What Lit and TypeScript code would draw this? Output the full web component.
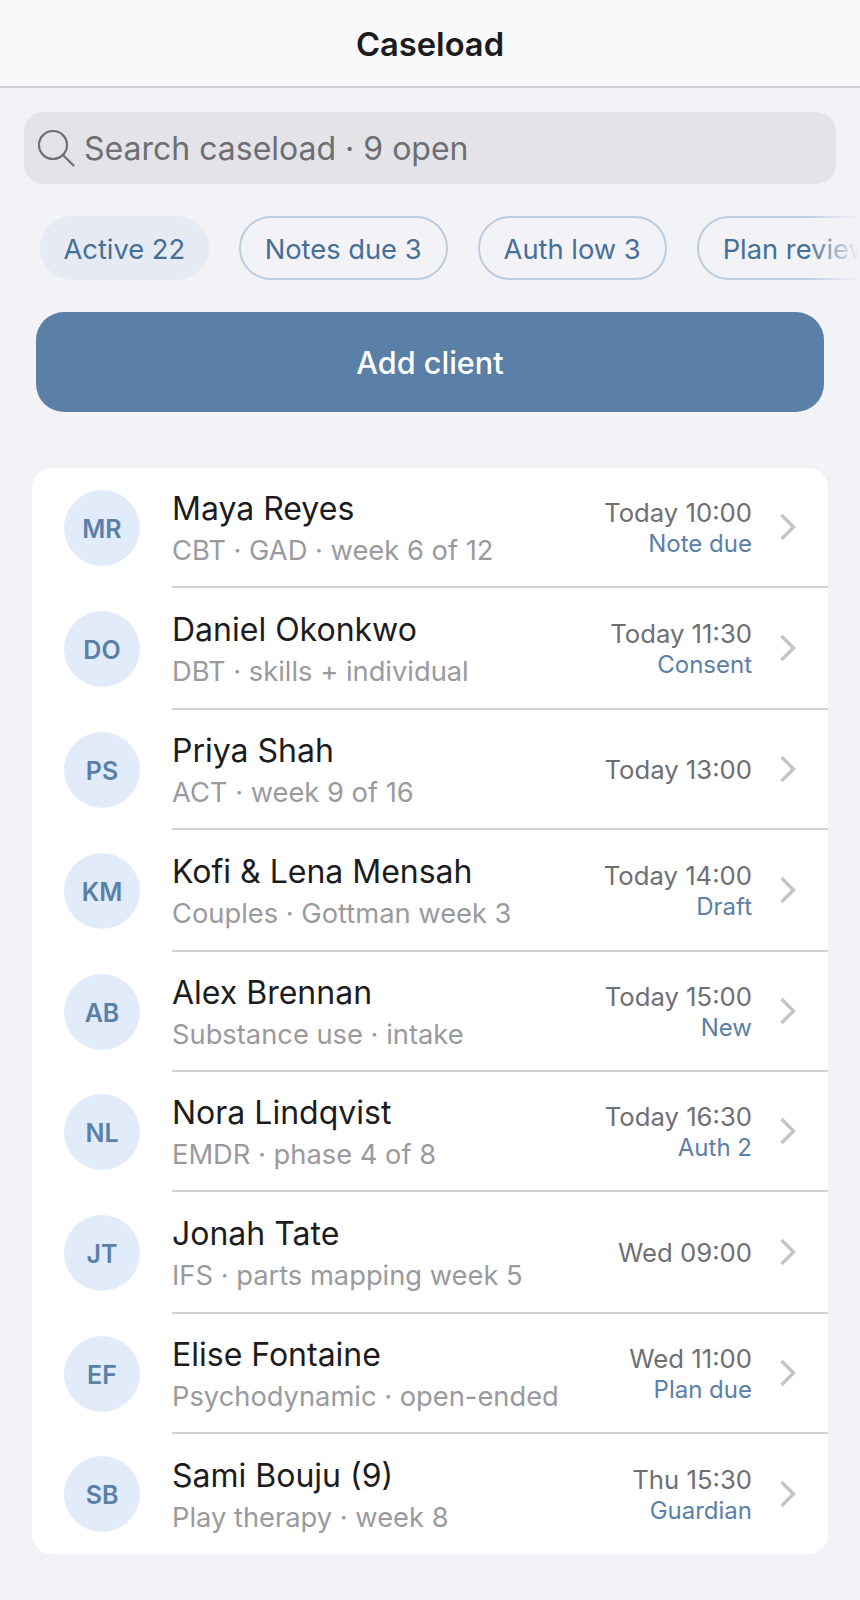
import { LitElement, html, css } from "lit";
import { customElement } from "lit/decorators.js";

const clients = [
  { i: "MR", n: "Maya Reyes", d: "CBT · GAD · week 6 of 12", t: "Today 10:00", s: "Note due" },
  { i: "DO", n: "Daniel Okonkwo", d: "DBT · skills + individual", t: "Today 11:30", s: "Consent" },
  { i: "PS", n: "Priya Shah", d: "ACT · week 9 of 16", t: "Today 13:00", s: "" },
  { i: "KM", n: "Kofi & Lena Mensah", d: "Couples · Gottman week 3", t: "Today 14:00", s: "Draft" },
  { i: "AB", n: "Alex Brennan", d: "Substance use · intake", t: "Today 15:00", s: "New" },
  { i: "NL", n: "Nora Lindqvist", d: "EMDR · phase 4 of 8", t: "Today 16:30", s: "Auth 2" },
  { i: "JT", n: "Jonah Tate", d: "IFS · parts mapping week 5", t: "Wed 09:00", s: "" },
  { i: "EF", n: "Elise Fontaine", d: "Psychodynamic · open-ended", t: "Wed 11:00", s: "Plan due" },
  { i: "SB", n: "Sami Bouju (9)", d: "Play therapy · week 8", t: "Thu 15:30", s: "Guardian" },
];

@customElement("app-root")
export class AppRoot extends LitElement {
  static styles = css`
    :host { display: block; width: 860px; height: 1600px; overflow: hidden; background: #f2f2f7; font-family: Inter, "Liberation Sans", sans-serif; }
    .nav { height: 84px; padding-top: 2px; background: #f9f9fb; border-bottom: 2px solid #d1d1d6; display: flex; align-items: center; justify-content: center; font-size: 32.7px; font-weight: 600; color: #1c1c1e; }
    .search { margin: 24px 24px 0; height: 72px; border-radius: 20px; background: #e3e3e8; display: flex; align-items: center; padding: 0 13px; gap: 9px; color: #6e6e73; font-size: 32px; }
    .chips { margin-top: 32px; padding-left: 40px; display: flex; gap: 30px; height: 64px; overflow: hidden; position: relative; }
    .chip { flex: none; height: 64px; box-sizing: border-box; border-radius: 32px; border: 2px solid #bccde0; padding: 3px 24px 0; display: flex; align-items: center; font-size: 27.3px; color: #466f98; white-space: nowrap; }
    .chip.on { background: #e6eaf3; border: 0; padding: 3px 23.5px 0; }
    .fade { position: absolute; top: 0; right: 0; width: 52px; height: 64px; background: linear-gradient(to right, rgba(242,242,247,0), #f2f2f7); }
    .add { margin: 32px 36px 0; height: 100px; box-sizing: border-box; padding-top: 1px; border-radius: 28px; background: #5a80a8; color: #fff; font-size: 30.6px; font-weight: 500; display: flex; align-items: center; justify-content: center; }
    .card { margin: 56px 32px 0; background: #fff; border-radius: 20px; overflow: hidden; }
    .row { height: 120px; display: flex; align-items: center; box-sizing: border-box; }
    .row:nth-child(2), .row:nth-child(4), .row:nth-child(7) { height: 122px; }
    .av { flex: none; width: 76px; height: 76px; box-sizing: border-box; padding-top: 2px; border-radius: 50%; background: #e1ebfa; color: #5a80a8; margin-left: 32px; font-size: 25px; font-weight: 600; display: flex; align-items: center; justify-content: center; }
    .body { flex: 1; height: 100%; margin-left: 32px; display: flex; align-items: center; box-sizing: border-box; border-bottom: 2px solid #d1d1d6; padding-right: 30px; min-width: 0; }
    .row:last-child .body { border-bottom: 0; }
    .text { flex: 1; min-width: 0; padding-top: 4px; }
    .name { font-size: 32px; line-height: 40px; color: #1c1c1e; }
    .desc { font-size: 27.3px; line-height: 36px; margin-top: 4px; color: #9a9a9e; }
    .right { text-align: right; margin-right: 28px; padding-top: 2px; }
    .time { font-size: 25.7px; line-height: 32px; color: #6e6e73; }
    .sub { font-size: 24px; line-height: 30px; color: #5a80a8; }
    svg { display: block; flex: none; }
  `;

  render() {
    return html`
      <div class="nav">Caseload</div>
      <div class="search">
        <svg width="38" height="38" viewBox="0 0 38 38" fill="none" stroke="#6e6e73" stroke-width="2.2" stroke-linecap="round"><circle cx="16" cy="16" r="14"/><path d="M26 26l10.5 10.5"/></svg>
        <span>Search caseload · 9 open</span>
      </div>
      <div class="chips">
        <div class="chip on">Active 22</div>
        <div class="chip">Notes due 3</div>
        <div class="chip">Auth low 3</div>
        <div class="chip">Plan review 2</div>
        <div class="fade"></div>
      </div>
      <div class="add">Add client</div>
      <div class="card">
        ${clients.map((c) => html`
          <div class="row">
            <div class="av">${c.i}</div>
            <div class="body">
              <div class="text">
                <div class="name">${c.n}</div>
                <div class="desc">${c.d}</div>
              </div>
              <div class="right">
                <div class="time">${c.t}</div>
                ${c.s ? html`<div class="sub">${c.s}</div>` : ""}
              </div>
              <svg width="18" height="28" viewBox="0 0 18 28" fill="none" stroke="#c4c4c7" stroke-width="3.4"><path d="M1.5 2l12 12-12 12"/></svg>
            </div>
          </div>
        `)}
      </div>
    `;
  }
}
